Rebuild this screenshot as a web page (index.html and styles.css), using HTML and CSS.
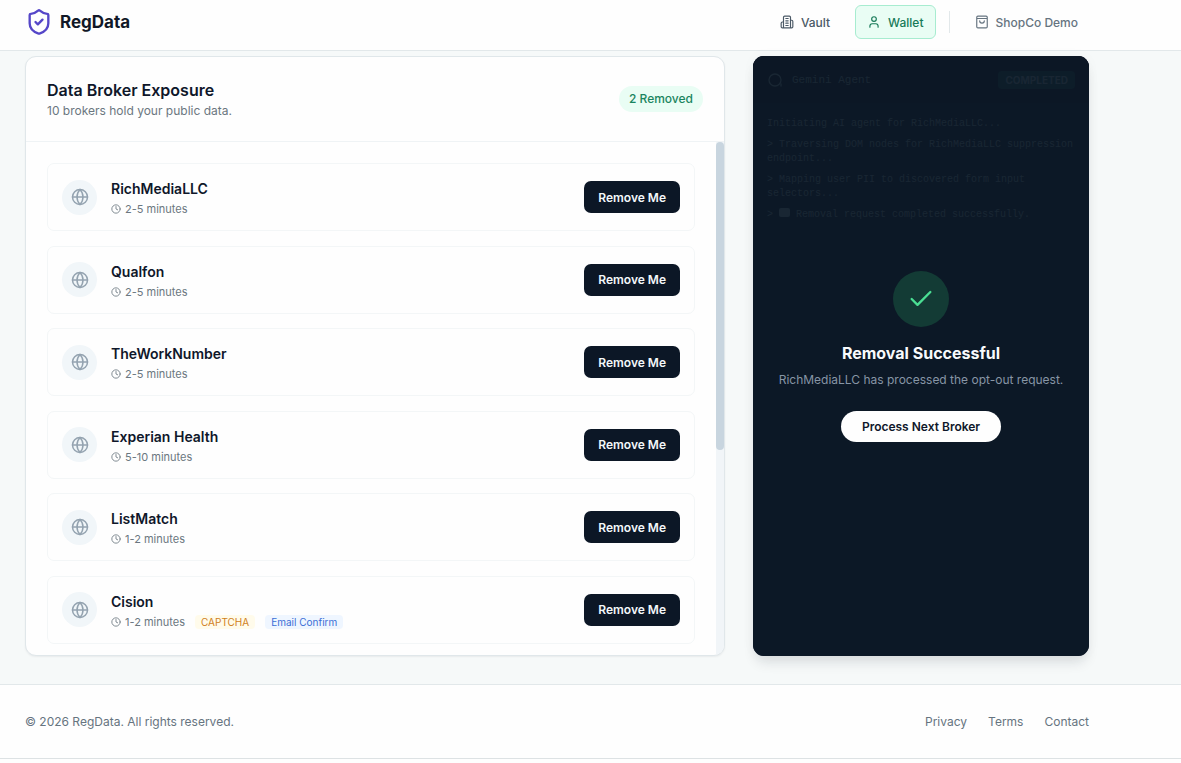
FILE: index.html
```html
<!DOCTYPE html>
<html lang="en">
<head>
<meta charset="utf-8">
<title>RegData</title>
<link rel="stylesheet" href="styles.css">
</head>
<body>
<svg class="sprite" aria-hidden="true">
  <symbol id="globe" viewBox="0 0 24 24"><circle cx="12" cy="12" r="10"/><path d="M12 2a14.5 14.5 0 0 0 0 20 14.5 14.5 0 0 0 0-20M2 12h20"/></symbol>
  <symbol id="clock" viewBox="0 0 24 24"><circle cx="12" cy="12" r="10"/><path d="M12 6v6l4 2"/></symbol>
</svg>
<header class="site-header">
  <div class="wrap header-row">
    <a class="brand" href="#">
      <svg class="icon brand-icon" viewBox="0 0 24 24"><path d="M20 13c0 5-3.500 7.500-7.660 8.950a1 1 0 0 1-.67-.01C7.500 20.500 4 18 4 13V6a1 1 0 0 1 1-1c2 0 4.500-1.200 6.240-2.720a1.170 1.170 0 0 1 1.520 0C14.510 3.810 17 5 19 5a1 1 0 0 1 1 1z"/><path d="m9 12 2 2 4-4"/></svg>
      <span>RegData</span>
    </a>
    <nav class="nav">
      <a class="nav-link" href="#"><svg class="icon nav-icon" viewBox="0 0 24 24"><path d="M6 22V4a2 2 0 0 1 2-2h8a2 2 0 0 1 2 2v18ZM6 12H4a2 2 0 0 0-2 2v6a2 2 0 0 0 2 2h2M18 9h2a2 2 0 0 1 2 2v9a2 2 0 0 1-2 2h-2M10 6h4M10 10h4M10 14h4M10 18h4"/></svg>Vault</a>
      <a class="nav-link active" href="#"><svg class="icon nav-icon" viewBox="0 0 24 24"><circle cx="12" cy="7" r="4"/><path d="M19 21v-2a4 4 0 0 0-4-4H9a4 4 0 0 0-4 4v2"/></svg>Wallet</a>
      <span class="divider"></span>
      <a class="nav-link muted" href="#"><svg class="icon nav-icon" viewBox="0 0 24 24"><path d="M5 2h14a2 2 0 0 1 2 2v16a2 2 0 0 1-2 2H5a2 2 0 0 1-2-2V4a2 2 0 0 1 2-2zM3 6h18M16 10a4 4 0 0 1-8 0"/></svg>ShopCo Demo</a>
    </nav>
  </div>
</header>

<main class="main">
  <div class="wrap columns">
    <section class="card">
      <div class="card-head">
        <div>
          <h2 class="card-title">Data Broker Exposure</h2>
          <p class="card-sub">10 brokers hold your public data.</p>
        </div>
        <span class="pill">2 Removed</span>
      </div>
      <div class="card-body">
        <ul class="brokers">
          <li class="broker"><span class="avatar"><svg class="icon globe"><use href="#globe"/></svg></span><div class="info"><h3 class="name">RichMediaLLC</h3><div class="meta"><span class="time"><svg class="icon clock"><use href="#clock"/></svg>2-5 minutes</span></div></div><button class="remove" type="button">Remove Me</button></li>
          <li class="broker"><span class="avatar"><svg class="icon globe"><use href="#globe"/></svg></span><div class="info"><h3 class="name">Qualfon</h3><div class="meta"><span class="time"><svg class="icon clock"><use href="#clock"/></svg>2-5 minutes</span></div></div><button class="remove" type="button">Remove Me</button></li>
          <li class="broker"><span class="avatar"><svg class="icon globe"><use href="#globe"/></svg></span><div class="info"><h3 class="name">TheWorkNumber</h3><div class="meta"><span class="time"><svg class="icon clock"><use href="#clock"/></svg>2-5 minutes</span></div></div><button class="remove" type="button">Remove Me</button></li>
          <li class="broker"><span class="avatar"><svg class="icon globe"><use href="#globe"/></svg></span><div class="info"><h3 class="name">Experian Health</h3><div class="meta"><span class="time"><svg class="icon clock"><use href="#clock"/></svg>5-10 minutes</span></div></div><button class="remove" type="button">Remove Me</button></li>
          <li class="broker"><span class="avatar"><svg class="icon globe"><use href="#globe"/></svg></span><div class="info"><h3 class="name">ListMatch</h3><div class="meta"><span class="time"><svg class="icon clock"><use href="#clock"/></svg>1-2 minutes</span></div></div><button class="remove" type="button">Remove Me</button></li>
          <li class="broker"><span class="avatar"><svg class="icon globe"><use href="#globe"/></svg></span><div class="info"><h3 class="name">Cision</h3><div class="meta"><span class="time"><svg class="icon clock"><use href="#clock"/></svg>1-2 minutes</span><span class="tag tag-amber">CAPTCHA</span><span class="tag tag-blue">Email Confirm</span></div></div><button class="remove" type="button">Remove Me</button></li>
        </ul>
        <div class="scrollbar"><div class="thumb"></div></div>
      </div>
    </section>

    <section class="agent">
      <div class="agent-head">
        <span class="agent-name"><svg class="icon agent-icon" viewBox="0 0 24 24"><circle cx="12" cy="12" r="9"/><path d="M21 18v3"/></svg>Gemini Agent</span>
        <span class="status">COMPLETED</span>
      </div>
      <div class="log">
        <p>Initiating AI agent for RichMediaLLC...</p>
        <p>&gt; Traversing DOM nodes for RichMediaLLC suppression endpoint...</p>
        <p>&gt; Mapping user PII to discovered form input selectors...</p>
        <p>&gt; <span class="block"></span> Removal request completed successfully.</p>
      </div>
      <div class="overlay">
        <span class="success"><svg class="icon check" viewBox="0 0 24 24"><path d="M20 6 9 17l-5-5"/></svg></span>
        <h2 class="overlay-title">Removal Successful</h2>
        <p class="overlay-text">RichMediaLLC has processed the opt-out request.</p>
        <button class="next" type="button">Process Next Broker</button>
      </div>
    </section>
  </div>
</main>

<footer class="footer">
  <div class="wrap footer-row">
    <p>© 2026 RegData. All rights reserved.</p>
    <nav class="footer-links"><a href="#">Privacy</a><a href="#">Terms</a><a href="#">Contact</a></nav>
  </div>
</footer>
</body>
</html>
```
FILE: styles.css
```css
* { box-sizing: border-box; margin: 0; padding: 0; }
body { font-family: Inter, "Liberation Sans", sans-serif; font-size: 12px; color: #0f172a; background: #fefefe; }
a { color: inherit; text-decoration: none; }
button { font: inherit; border: 0; cursor: pointer; }
ul { list-style: none; }
.sprite { position: absolute; width: 0; height: 0; }
.icon { fill: none; stroke: currentColor; stroke-width: 2; stroke-linecap: round; stroke-linejoin: round; flex: none; }
.wrap { max-width: 1114px; padding: 0 25px; }

.site-header { background: #fefefe; border-bottom: 1px solid #e2e8ea; padding: 5px 0 11px; }
.header-row { display: flex; align-items: center; justify-content: space-between; }
.brand { display: flex; align-items: center; gap: 7px; font-size: 17px; font-weight: 700; color: #111827; }
.brand-icon { width: 28px; height: 28px; color: #5546c8; }
.nav { display: flex; align-items: center; gap: 13px; }
.nav-link { display: flex; align-items: center; gap: 7px; height: 34px; padding: 0 11px; border: 1px solid transparent; border-radius: 6px; color: #4b5966; font-weight: 500; }
.nav-link.active { color: #177a58; background: #e9fdf4; border-color: #a7ecd0; }
.nav-link.muted { color: #667480; padding-right: 10px; }
.nav-icon { width: 14px; height: 14px; }
.divider { width: 1px; height: 22px; background: #e2e8ea; }

.main { background: #f6f9f9; padding: 5px 0 28px; }
.columns { display: grid; grid-template-columns: 25fr 12fr; gap: 28px; min-height: 600px; }

.card { display: flex; flex-direction: column; background: #fefefe; border: 1px solid #e0e7ea; border-radius: 11px; overflow: hidden; box-shadow: 0 1px 2px rgba(15, 23, 42, .06); }
.card-head { display: flex; align-items: center; justify-content: space-between; padding: 21px; border-bottom: 1px solid #eff3f5; }
.card-title { font-size: 16px; line-height: 24px; font-weight: 600; }
.card-sub { line-height: 18px; color: #6b7780; }
.pill { padding: 0 10px; line-height: 26px; border-radius: 13px; background: #e9fdf4; color: #1b8560; font-weight: 500; }
.card-body { flex: 1; display: flex; }
.brokers { flex: 1; display: flex; flex-direction: column; justify-content: space-between; gap: 8px; padding: 21px 21px 11px; }
.broker { display: flex; align-items: center; gap: 14px; padding: 13px 14px; border: 1px solid #f3f6f7; border-radius: 7px; }
.avatar { display: flex; align-items: center; justify-content: center; width: 35px; height: 35px; border-radius: 50%; background: #f1f6f9; color: #94a3b0; }
.globe { width: 18px; height: 18px; }
.info { flex: 1; }
.name { font-size: 14px; line-height: 24px; font-weight: 600; }
.meta { display: flex; align-items: center; gap: 10px; font-size: 11px; line-height: 16px; color: #6b7780; }
.time { display: flex; align-items: center; gap: 4px; }
.clock { width: 10px; height: 10px; }
.tag { padding: 0 6px; font-size: 10px; line-height: 14px; border-radius: 4px; }
.tag-amber { color: #d08020; background: #fffbeb; }
.tag-blue { color: #3b6fd6; background: #eff6ff; }
.remove { height: 32px; padding: 0 14px; border-radius: 7px; background: #0c1726; color: #f4f8fa; font-weight: 600; }
.scrollbar { width: 8px; background: #f1f5f8; }
.thumb { height: 60%; border-radius: 4px; background: #c8d5df; }

.agent { position: relative; background: #0f172a; border-radius: 11px; overflow: hidden; box-shadow: 0 9px 13px -3px rgba(15, 23, 42, .12), 0 0 14px rgba(15, 23, 42, .03); font-family: "Liberation Mono", monospace; }
.agent-head { display: flex; align-items: center; justify-content: space-between; height: 47px; padding: 0 14px; background: #0a0f1e; color: #8aa0a8; }
.agent-name { display: flex; align-items: center; gap: 9px; font-size: 11px; }
.agent-icon { width: 16px; height: 16px; }
.status { padding: 0 7px; font: 700 10px/18px Inter, sans-serif; border-radius: 4px; background: #174a4e; }
.log { display: grid; gap: 7px; padding: 14px; font-size: 10px; line-height: 14px; color: #8aa0a8; }
.block { display: inline-block; width: 11px; height: 9px; border-radius: 2px; background: #8aa0a8; }
.overlay { position: absolute; inset: 0; display: flex; flex-direction: column; align-items: center; justify-content: center; background: rgba(12, 24, 38, .9); font-family: Inter, sans-serif; }
.success { display: flex; align-items: center; justify-content: center; width: 56px; height: 56px; border-radius: 50%; background: #133b35; color: #4ade93; }
.check { width: 28px; height: 28px; }
.overlay-title { margin-top: 14px; font-size: 16px; line-height: 24px; font-weight: 700; color: #f8fafc; }
.overlay-text { margin: 5px 0 21px; line-height: 20px; color: #8795a5; }
.next { height: 31px; padding: 0 21px; border-radius: 16px; background: #fefefe; color: #0f172a; font-weight: 600; }

.footer { background: #fefefe; border-top: 1px solid #e2e8ea; border-bottom: 1px solid #dde2e4; padding: 27px 0 26px; color: #667480; }
.footer-row { display: flex; justify-content: space-between; line-height: 20px; }
.footer-links { display: flex; gap: 21px; }
```
